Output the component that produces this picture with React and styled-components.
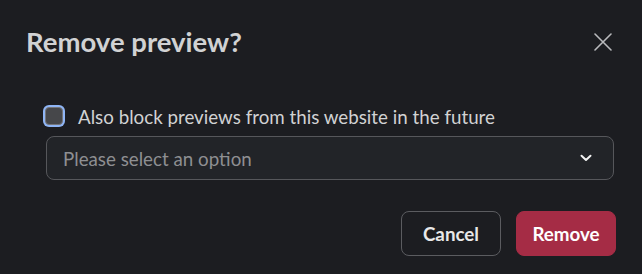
import styled, { createGlobalStyle } from 'styled-components';

const GlobalStyle = createGlobalStyle`
  html, body {
    margin: 0;
    padding: 0;
    background: #1c1d21;
  }
  body {
    font-family: Lato, "Noto Sans", sans-serif;
  }
`;

export default function App() {
  return (
    <>
      <GlobalStyle />
      <Dialog>
        <Header>
          <Title>Remove preview?</Title>
          <CloseButton aria-label="Close">
            <svg width="18" height="18" viewBox="0 0 18 18">
              <path d="M1 1 L17 17 M17 1 L1 17" stroke="#b9babd" strokeWidth="1.6" strokeLinecap="round" fill="none" />
            </svg>
          </CloseButton>
        </Header>
        <Body>
          <CheckRow>
            <CheckBox />
            <CheckLabel>Also block previews from this website in the future</CheckLabel>
          </CheckRow>
          <Select>
            <Placeholder>Please select an option</Placeholder>
            <svg width="12" height="8" viewBox="0 0 12 8">
              <path d="M1.5 1.8 L6 6 L10.5 1.8" stroke="#f2f2f2" strokeWidth="2" strokeLinecap="round" strokeLinejoin="round" fill="none" />
            </svg>
          </Select>
        </Body>
        <Footer>
          <Button>Cancel</Button>
          <Button $danger>Remove</Button>
        </Footer>
      </Dialog>
    </>
  );
}

const Dialog = styled.div`
  width: 642px;
  height: 274px;
  box-sizing: border-box;
  background: #1c1d21;
  padding: 24px 26px 0 26px;
`;

const Header = styled.div`
  display: flex;
  align-items: center;
  justify-content: space-between;
  height: 36px;
`;

const Title = styled.h1`
  margin: 0;
  font-size: 27.5px;
  font-weight: 700;
  color: #d1d2d3;
  line-height: 36px;
`;

const CloseButton = styled.button`
  display: flex;
  align-items: center;
  justify-content: center;
  width: 28px;
  height: 28px;
  margin-right: -1px;
  padding: 0;
  background: none;
  border: none;
`;

const Body = styled.div`
  display: flex;
  flex-direction: column;
  gap: 9px;
  margin-top: 45px;
  padding-left: 17px;
  padding-right: 2px;
`;

const CheckRow = styled.label`
  display: flex;
  align-items: center;
  gap: 15px;
  height: 22px;
`;

const CheckBox = styled.span`
  width: 18px;
  height: 18px;
  box-sizing: border-box;
  border: 1px solid #75767a;
  border-radius: 4px;
  background: #46474a;
  box-shadow: 0 0 0 2px #8fb5f5;
  margin-left: 2px;
`;

const CheckLabel = styled.span`
  font-size: 18.75px;
  color: #d1d2d3;
`;

const Select = styled.div`
  display: flex;
  align-items: center;
  justify-content: space-between;
  height: 44px;
  box-sizing: border-box;
  margin-left: 3px;
  padding: 0 21px 0 16px;
  border: 1px solid #56575b;
  border-radius: 8px;
  background: #222428;
`;

const Placeholder = styled.span`
  font-size: 18.75px;
  color: #8e8f92;
`;

const Footer = styled.div`
  display: flex;
  justify-content: flex-end;
  gap: 15px;
  margin-top: 31px;
`;

const Button = styled.button`
  height: 45px;
  width: 100px;
  box-sizing: border-box;
  border-radius: 8px;
  font-family: Lato, "Noto Sans", sans-serif;
  font-size: 18.75px;
  font-weight: 700;
  color: ${p => (p.$danger ? '#ffffff' : '#e8e8e8')};
  background: ${p => (p.$danger ? '#a52c45' : 'transparent')};
  border: 1px solid ${p => (p.$danger ? '#a52c45' : '#5b5c60')};
`;
